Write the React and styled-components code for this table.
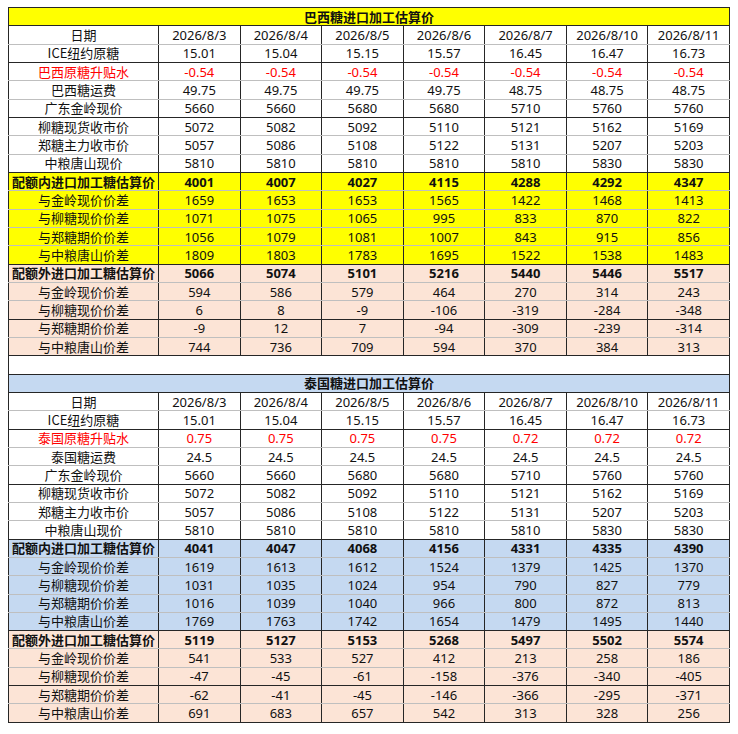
import React from "react";
import styled, { createGlobalStyle } from "styled-components";

const DARK = "#262626";
const LIGHT = "#bfbfbf";

const FILLS = {
  white: "#ffffff",
  yellow: "#ffff00",
  peach: "#fce4d6",
  blue: "#c5d9f1",
};

const GlobalStyle = createGlobalStyle`
  body {
    margin: 0;
    padding: 7px 8px;
    background: #ffffff;
    font-family: "Noto Sans", "Noto Sans CJK SC", sans-serif;
    color: #111111;
  }
`;

const Sheet = styled.table`
  width: 722px;
  table-layout: fixed;
  border-collapse: collapse;
  font-size: 13px;
  line-height: 16px;
`;

const Row = styled.tr`
  height: 18.33px;
  background: ${(p) => FILLS[p.fill] || FILLS.white};
`;

const Cell = styled.td`
  padding: 0;
  text-align: center;
  white-space: nowrap;
  overflow: hidden;
  border-left: 1px solid ${(p) => (p.soft ? LIGHT : DARK)};
  border-right: 1px solid ${DARK};
  border-bottom: 1px solid ${(p) => (p.line === "light" ? LIGHT : DARK)};
  color: ${(p) => (p.red ? "#ff0000" : "#111111")};
  font-weight: ${(p) => (p.bold ? 700 : 400)};
  font-family: "Noto Sans", "Noto Sans CJK SC", sans-serif;
`;

const LabelCell = styled(Cell)`
  font-family: "Noto Sans CJK SC", sans-serif;
`;

const Title = styled.td`
  padding: 0;
  text-align: center;
  font-weight: 700;
  border: 1px solid ${DARK};
  font-family: "Noto Sans CJK SC", sans-serif;
`;

const Spacer = styled.td`
  padding: 0;
  border-left: 1px solid ${DARK};
  border-right: 1px solid ${DARK};
  border-bottom: 1px solid ${DARK};
`;

const DATES = ["2026/8/3", "2026/8/4", "2026/8/5", "2026/8/6", "2026/8/7", "2026/8/10", "2026/8/11"];

const common = {
  ice: ["15.01", "15.04", "15.15", "15.57", "16.45", "16.47", "16.73"],
  jinling: ["5660", "5660", "5680", "5680", "5710", "5760", "5760"],
  liu: ["5072", "5082", "5092", "5110", "5121", "5162", "5169"],
  zheng: ["5057", "5086", "5108", "5122", "5131", "5207", "5203"],
  zhongliang: ["5810", "5810", "5810", "5810", "5810", "5830", "5830"],
};

const diffLabels = ["与金岭现价价差", "与柳糖现价价差", "与郑糖期价价差", "与中粮唐山价差"];
const diffLines = ["light", "light", "light", "dark"];
const outerLines = ["light", "dark", "light", "dark"];

const sections = [
  {
    title: "巴西糖进口加工估算价",
    titleFill: "yellow",
    quotaFill: "yellow",
    premiumLabel: "巴西原糖升贴水",
    premium: Array(7).fill("-0.54"),
    freightLabel: "巴西糖运费",
    freight: ["49.75", "49.75", "49.75", "49.75", "48.75", "48.75", "48.75"],
    inQuota: ["4001", "4007", "4027", "4115", "4288", "4292", "4347"],
    inDiffs: [
      ["1659", "1653", "1653", "1565", "1422", "1468", "1413"],
      ["1071", "1075", "1065", "995", "833", "870", "822"],
      ["1056", "1079", "1081", "1007", "843", "915", "856"],
      ["1809", "1803", "1783", "1695", "1522", "1538", "1483"],
    ],
    outQuota: ["5066", "5074", "5101", "5216", "5440", "5446", "5517"],
    outDiffs: [
      ["594", "586", "579", "464", "270", "314", "243"],
      ["6", "8", "-9", "-106", "-319", "-284", "-348"],
      ["-9", "12", "7", "-94", "-309", "-239", "-314"],
      ["744", "736", "709", "594", "370", "384", "313"],
    ],
  },
  {
    title: "泰国糖进口加工估算价",
    titleFill: "blue",
    quotaFill: "blue",
    premiumLabel: "泰国原糖升贴水",
    premium: ["0.75", "0.75", "0.75", "0.75", "0.72", "0.72", "0.72"],
    freightLabel: "泰国糖运费",
    freight: Array(7).fill("24.5"),
    inQuota: ["4041", "4047", "4068", "4156", "4331", "4335", "4390"],
    inDiffs: [
      ["1619", "1613", "1612", "1524", "1379", "1425", "1370"],
      ["1031", "1035", "1024", "954", "790", "827", "779"],
      ["1016", "1039", "1040", "966", "800", "872", "813"],
      ["1769", "1763", "1742", "1654", "1479", "1495", "1440"],
    ],
    outQuota: ["5119", "5127", "5153", "5268", "5497", "5502", "5574"],
    outDiffs: [
      ["541", "533", "527", "412", "213", "258", "186"],
      ["-47", "-45", "-61", "-158", "-376", "-340", "-405"],
      ["-62", "-41", "-45", "-146", "-366", "-295", "-371"],
      ["691", "683", "657", "542", "313", "328", "256"],
    ],
  },
];

function buildRows(s) {
  return [
    { label: "日期", values: DATES, line: "light" },
    { label: "ICE纽约原糖", values: common.ice, line: "dark" },
    { label: s.premiumLabel, values: s.premium, line: "light", red: true },
    { label: s.freightLabel, values: s.freight, line: "light" },
    { label: "广东金岭现价", values: common.jinling, line: "dark" },
    { label: "柳糖现货收市价", values: common.liu, line: "light" },
    { label: "郑糖主力收市价", values: common.zheng, line: "light" },
    { label: "中粮唐山现价", values: common.zhongliang, line: "dark" },
    { label: "配额内进口加工糖估算价", values: s.inQuota, line: "light", bold: true, fill: s.quotaFill },
    ...s.inDiffs.map((v, i) => ({ label: diffLabels[i], values: v, line: diffLines[i], fill: s.quotaFill })),
    { label: "配额外进口加工糖估算价", values: s.outQuota, line: "light", bold: true, fill: "peach" },
    ...s.outDiffs.map((v, i) => ({ label: diffLabels[i], values: v, line: outerLines[i], fill: "peach" })),
  ];
}

const DataRow = ({ row }) => (
  <Row fill={row.fill}>
    <LabelCell line={row.line} red={row.red} bold={row.bold}>
      {row.label}
    </LabelCell>
    {row.values.map((v, i) => (
      <Cell key={i} line={row.line} red={row.red} bold={row.bold} soft={i === 6}>
        {v}
      </Cell>
    ))}
  </Row>
);

const Section = ({ data }) => (
  <>
    <Row fill={data.titleFill}>
      <Title colSpan={8}>{data.title}</Title>
    </Row>
    {buildRows(data).map((row, i) => (
      <DataRow key={i} row={row} />
    ))}
  </>
);

export default function App() {
  return (
    <>
      <GlobalStyle />
      <Sheet>
        <colgroup>
          <col style={{ width: 150 }} />
          {DATES.map((d) => (
            <col key={d} />
          ))}
        </colgroup>
        <tbody>
          <Section data={sections[0]} />
          <Row>
            <Spacer colSpan={8} />
          </Row>
          <Section data={sections[1]} />
        </tbody>
      </Sheet>
    </>
  );
}
